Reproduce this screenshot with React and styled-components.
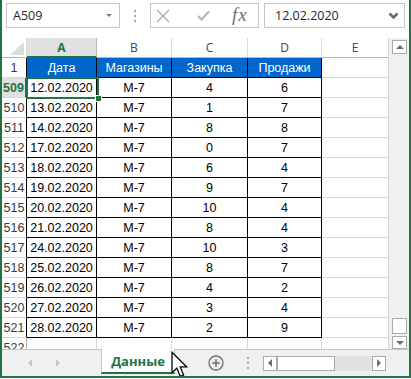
import React from "react";
import styled, { createGlobalStyle, css } from "styled-components";

const GREEN = "#217346";
const GRID = "#d9d9d9";
const HEAD_LINE = "#b7b7b7";

const GlobalStyle = createGlobalStyle`
  html, body {
    margin: 0;
    padding: 0;
    background: #fff;
  }
  body {
    font-family: "Liberation Sans", Arial, sans-serif;
  }
`;

const Window = styled.div`
  width: 411px;
  height: 378px;
  box-sizing: border-box;
  border: 2px solid ${GREEN};
  border-top: none;
  display: flex;
  flex-direction: column;
  overflow: hidden;
  background: #fff;
`;

/* ---------- formula bar ---------- */

const FormulaBar = styled.div`
  height: 38px;
  flex: none;
  box-sizing: border-box;
  padding: 3px 4px 0 4px;
  display: flex;
  align-items: flex-start;
  font-family: "Open Sans", "Noto Sans", sans-serif;
  font-size: 12.5px;
  color: #262626;
`;

const NameBox = styled.div`
  width: 114px;
  height: 25px;
  box-sizing: border-box;
  border: 1px solid #c6c6c6;
  display: flex;
  align-items: center;
  justify-content: space-between;
  padding: 0 7px 0 6px;
`;

const SmallArrow = styled.span`
  width: 0;
  height: 0;
  border-left: 3.5px solid transparent;
  border-right: 3.5px solid transparent;
  border-top: 3.5px solid #7a7a7a;
`;

const GripSlot = styled.div`
  width: 30px;
  height: 25px;
  display: flex;
  justify-content: center;
  align-items: center;
`;

const Dots = styled.div`
  display: flex;
  flex-direction: column;
  gap: 3px;
  margin-left: ${p => p.$shift || 0}px;

  span {
    width: 2px;
    height: 2px;
    background: #a9a9a9;
  }
`;

const FxBox = styled.div`
  width: 109px;
  height: 25px;
  box-sizing: border-box;
  border: 1px solid #c6c6c6;
  display: flex;
  align-items: center;
  padding-left: 5px;
`;

const Fx = styled.span`
  margin-left: 22px;
  font-family: "Liberation Serif", "Times New Roman", serif;
  font-style: italic;
  font-size: 19px;
  letter-spacing: 1px;
  color: #6e6e6e;
  line-height: 1;
  margin-top: -2px;
`;

const FormulaInput = styled.div`
  flex: 1;
  margin-left: 5px;
  height: 25px;
  box-sizing: border-box;
  border: 1px solid #c6c6c6;
  display: flex;
  align-items: center;
  justify-content: space-between;
  padding: 0 5px 0 10px;
`;

/* ---------- sheet ---------- */

const SheetArea = styled.div`
  height: 311px;
  flex: none;
  display: flex;
`;

const Grid = styled.div`
  position: relative;
  width: 387px;
  height: 311px;
  overflow: hidden;
  display: grid;
  grid-template-columns: 25px 70px 75px 76px 74px 67px;
  grid-auto-rows: 20px;
  align-content: start;
`;

const cellBase = css`
  box-sizing: border-box;
  display: flex;
  align-items: center;
  justify-content: center;
  white-space: nowrap;
  overflow: hidden;
`;

const Corner = styled.div`
  ${cellBase};
  position: relative;
  border-right: 1px solid ${GRID};
  border-bottom: 1px solid ${HEAD_LINE};

  &::after {
    content: "";
    position: absolute;
    right: 2px;
    bottom: 2px;
    width: 14px;
    height: 13px;
    background: #dcdcdc;
    clip-path: polygon(100% 0, 100% 100%, 0 100%);
  }
`;

const ColHead = styled.div`
  ${cellBase};
  font-family: "Open Sans", "Noto Sans", sans-serif;
  font-size: 12px;
  color: #444;
  border-right: 1px solid ${GRID};
  border-bottom: 1px solid ${HEAD_LINE};
  ${p =>
    p.$sel &&
    css`
      background: #e1e1e1;
      color: ${GREEN};
      font-weight: bold;
      border-bottom: 2px solid ${GREEN};
      border-right-color: ${HEAD_LINE};
    `}
`;

const RowHead = styled.div`
  ${cellBase};
  font-size: 12.5px;
  color: #3a3a3a;
  border-bottom: 1px solid ${GRID};
  border-right: 1px solid ${p => (p.$table ? "#000" : HEAD_LINE)};
  ${p =>
    p.$sel &&
    css`
      background: #e1e1e1;
      color: ${GREEN};
      font-weight: bold;
      border-right: 2px solid ${GREEN};
    `}
`;

const Cell = styled.div`
  ${cellBase};
  font-size: 12.5px;
  color: #000;
  border-right: 1px solid ${p => (p.$table ? "#000" : GRID)};
  border-bottom: 1px solid ${p => (p.$table ? "#000" : GRID)};
  ${p =>
    p.$head &&
    css`
      background: #0066cc;
      color: #fff;
    `}
`;

const Selection = styled.div`
  position: absolute;
  left: 24px;
  top: 39px;
  width: 73px;
  height: 22px;
  box-sizing: border-box;
  border: 2px solid ${GREEN};
  pointer-events: none;

  &::after {
    content: "";
    position: absolute;
    right: -5px;
    bottom: -5px;
    width: 5px;
    height: 5px;
    background: ${GREEN};
    border: 1px solid #fff;
  }
`;

const VScroll = styled.div`
  width: 20px;
  background: #f0f0f0;
  box-sizing: border-box;
  padding: 2px 2px 0 3px;
  display: flex;
  flex-direction: column;
`;

const ScrollBtn = styled.div`
  flex: none;
  box-sizing: border-box;
  width: ${p => p.$w || 15}px;
  height: ${p => p.$h || 14}px;
  background: #fff;
  border: 1px solid #ababab;
  display: flex;
  align-items: center;
  justify-content: center;
`;

const Tri = styled.span`
  width: 0;
  height: 0;
  ${p =>
    p.$dir === "up" &&
    css`
      border-left: 4px solid transparent;
      border-right: 4px solid transparent;
      border-bottom: 4px solid #6d6d6d;
    `}
  ${p =>
    p.$dir === "down" &&
    css`
      border-left: 4px solid transparent;
      border-right: 4px solid transparent;
      border-top: 4px solid #6d6d6d;
    `}
  ${p =>
    p.$dir === "left" &&
    css`
      border-top: 4px solid transparent;
      border-bottom: 4px solid transparent;
      border-right: 4px solid ${p.$color || "#6d6d6d"};
    `}
  ${p =>
    p.$dir === "right" &&
    css`
      border-top: 4px solid transparent;
      border-bottom: 4px solid transparent;
      border-left: 4px solid ${p.$color || "#6d6d6d"};
    `}
`;

const Spacer = styled.div`
  flex: ${p => (p.$size ? "none" : 1)};
  height: ${p => (p.$size ? `${p.$size}px` : "auto")};
`;

/* ---------- sheet tabs ---------- */

const TabBar = styled.div`
  position: relative;
  height: 27px;
  flex: none;
  box-sizing: border-box;
  background: #f0f0f0;
  border-top: 1px solid #c6c6c6;
  display: flex;
  align-items: center;
`;

const NavArrows = styled.div`
  width: 99px;
  display: flex;
  align-items: center;
  padding-left: 26px;
  box-sizing: border-box;
  gap: 24px;
`;

const SheetTab = styled.div`
  align-self: flex-start;
  margin-top: -1px;
  width: 74px;
  height: 25px;
  box-sizing: border-box;
  background: #fff;
  border-left: 1px solid #c6c6c6;
  border-right: 1px solid #c6c6c6;
  border-bottom: 2px solid ${GREEN};
  display: flex;
  align-items: center;
  justify-content: center;
  font-family: "Open Sans", "Noto Sans", sans-serif;
  font-weight: bold;
  font-size: 13px;
  color: ${GREEN};
`;

const AddSheet = styled.svg`
  margin-left: 33px;
  flex: none;
`;

const HScroll = styled.div`
  margin-left: 14px;
  display: flex;
  align-items: center;
  height: 15px;
`;

const Thumb = styled.div`
  box-sizing: border-box;
  width: ${p => p.$w}px;
  height: ${p => p.$h}px;
  background: #fff;
  border: 1px solid #ababab;
`;

const Track = styled.div`
  width: 37px;
  height: 15px;
  background: #e2e2e2;
`;

const Cursor = styled.svg`
  position: absolute;
  left: 168px;
  top: 1px;
  pointer-events: none;
`;

const rows = [
  [509, "12.02.2020", 4, 6],
  [510, "13.02.2020", 1, 7],
  [511, "14.02.2020", 8, 8],
  [512, "17.02.2020", 0, 7],
  [513, "18.02.2020", 6, 4],
  [514, "19.02.2020", 9, 7],
  [515, "20.02.2020", 10, 4],
  [516, "21.02.2020", 8, 4],
  [517, "24.02.2020", 10, 3],
  [518, "25.02.2020", 8, 7],
  [519, "26.02.2020", 4, 2],
  [520, "27.02.2020", 3, 4],
  [521, "28.02.2020", 2, 9]
];

const headers = ["Дата", "Магазины", "Закупка", "Продажи"];

function GripDots({ shift }) {
  return (
    <Dots $shift={shift}>
      <span />
      <span />
      <span />
    </Dots>
  );
}

export default function App() {
  return (
    <>
      <GlobalStyle />
      <Window>
        <FormulaBar>
          <NameBox>
            <span>A509</span>
            <SmallArrow />
          </NameBox>
          <GripSlot>
            <GripDots />
          </GripSlot>
          <FxBox>
            <svg width="14" height="14" viewBox="0 0 14 14">
              <path d="M1 1 L13 13 M13 1 L1 13" stroke="#a8a8a8" strokeWidth="1.3" fill="none" />
            </svg>
            <svg width="13" height="11" viewBox="0 0 13 11" style={{ marginLeft: 27 }}>
              <path d="M1 6 L4.5 9.5 L12 1.5" stroke="#b6b6b6" strokeWidth="2.2" fill="none" />
            </svg>
            <Fx>fx</Fx>
          </FxBox>
          <FormulaInput>
            <span>12.02.2020</span>
            <svg width="11" height="8" viewBox="0 0 11 8">
              <path d="M1.5 1.5 L5.5 5.5 L9.5 1.5" stroke="#6a6a6a" strokeWidth="2.6" fill="none" />
            </svg>
          </FormulaInput>
        </FormulaBar>

        <SheetArea>
          <Grid>
            <Corner />
            <ColHead $sel>A</ColHead>
            <ColHead>B</ColHead>
            <ColHead>C</ColHead>
            <ColHead>D</ColHead>
            <ColHead>E</ColHead>

            <RowHead $table>1</RowHead>
            {headers.map(h => (
              <Cell key={h} $table $head>
                {h}
              </Cell>
            ))}
            <Cell />

            {rows.map(([n, date, buy, sell]) => (
              <React.Fragment key={n}>
                <RowHead $table $sel={n === 509}>
                  {n}
                </RowHead>
                <Cell $table>{date}</Cell>
                <Cell $table>М-7</Cell>
                <Cell $table>{buy}</Cell>
                <Cell $table>{sell}</Cell>
                <Cell />
              </React.Fragment>
            ))}

            <RowHead>522</RowHead>
            <Cell />
            <Cell />
            <Cell />
            <Cell />
            <Cell />

            <Selection />
          </Grid>

          <VScroll>
            <ScrollBtn>
              <Tri $dir="up" />
            </ScrollBtn>
            <Spacer />
            <Thumb $w={15} $h={16} />
            <Spacer $size={2} />
            <ScrollBtn $h={13}>
              <Tri $dir="down" />
            </ScrollBtn>
          </VScroll>
        </SheetArea>

        <TabBar>
          <NavArrows>
            <Tri $dir="left" $color="#c4c4c4" />
            <Tri $dir="right" $color="#c4c4c4" />
          </NavArrows>
          <SheetTab>Данные</SheetTab>
          <AddSheet width="16" height="16" viewBox="0 0 16 16">
            <circle cx="8" cy="8" r="7" stroke="#707070" strokeWidth="1.3" fill="none" />
            <path d="M8 4.2 V11.8 M4.2 8 H11.8" stroke="#707070" strokeWidth="1.6" />
          </AddSheet>
          <Dots $shift={23}>
            <span />
            <span />
            <span />
          </Dots>
          <HScroll>
            <ScrollBtn $w={14} $h={15}>
              <Tri $dir="left" />
            </ScrollBtn>
            <Thumb $w={58} $h={15} />
            <Track />
            <ScrollBtn $w={14} $h={15}>
              <Tri $dir="right" />
            </ScrollBtn>
          </HScroll>
          <Cursor width="18" height="28" viewBox="0 0 14 22">
            <path
              d="M1.5 1 L1.5 17 L5.3 13.4 L8 20 L10.6 18.9 L8 12.5 L13 12.5 Z"
              fill="#fff"
              stroke="#000"
              strokeWidth="1"
              strokeLinejoin="miter"
            />
          </Cursor>
        </TabBar>
      </Window>
    </>
  );
}
